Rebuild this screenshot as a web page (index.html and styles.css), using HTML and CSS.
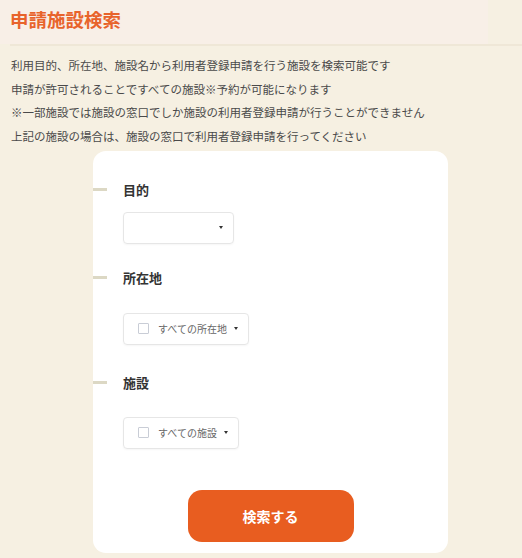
FILE: index.html
```html
<!DOCTYPE html>
<html lang="ja">
<head>
<meta charset="utf-8">
<title>申請施設検索</title>
<link rel="stylesheet" href="styles.css">
</head>
<body>
<div class="page-head">
  <h1 class="title">申請施設検索</h1>
</div>
<div class="rule"></div>
<div class="desc">
  <p>利用目的、所在地、施設名から利用者登録申請を行う施設を検索可能です</p>
  <p>申請が許可されることですべての施設※予約が可能になります</p>
  <p>※一部施設では施設の窓口でしか施設の利用者登録申請が行うことができません</p>
  <p>上記の施設の場合は、施設の窓口で利用者登録申請を行ってください</p>
</div>
<div class="card">
  <div class="field field-1">
    <div class="field-label"><span class="dash"></span><span>目的</span></div>
    <div class="select select-empty"><span class="caret"></span></div>
  </div>
  <div class="field field-2">
    <div class="field-label"><span class="dash"></span><span>所在地</span></div>
    <div class="select"><span class="check"></span><span class="opt">すべての所在地</span><span class="caret"></span></div>
  </div>
  <div class="field field-3">
    <div class="field-label"><span class="dash"></span><span>施設</span></div>
    <div class="select"><span class="check"></span><span class="opt">すべての施設</span><span class="caret"></span></div>
  </div>
  <div class="actions">
    <button class="search-btn" type="button">検索する</button>
  </div>
</div>
</body>
</html>
```
FILE: styles.css
```css
* { box-sizing: border-box; }
html, body { margin: 0; padding: 0; }
body {
  background: #f6f0e2;
  font-family: "Noto Sans CJK JP", "Noto Sans", sans-serif;
  color: #333;
  width: 522px;
  height: 558px;
  overflow: hidden;
}
.page-head {
  width: 488px;
  height: 44px;
  background: #f8efe7;
  padding-left: 10px;
  display: flex;
  align-items: center;
}
.title {
  margin: 0;
  font-size: 18.5px;
  font-weight: 700;
  color: #e8632b;
  line-height: 24px;
  padding-bottom: 6px;
}
.rule {
  margin-left: 10px;
  border-top: 2px solid #efe7d7;
}
.desc {
  margin-top: 8px;
  padding-left: 11px;
  font-size: 11.5px;
  line-height: 23.7px;
  color: #4a4a4a;
}
.desc p { margin: 0; white-space: nowrap; }
.card {
  margin: 2px 0 0 93px;
  width: 355px;
  height: 402px;
  background: #fff;
  border-radius: 13px;
  padding: 29px 0 12px 0;
}
.field-label {
  display: flex;
  align-items: center;
  gap: 16px;
  height: 20px;
  font-size: 13px;
  font-weight: 700;
  color: #333;
}
.dash {
  width: 14px;
  height: 3px;
  background: #dcd8c4;
}
.select {
  margin-left: 30px;
  height: 32px;
  display: inline-flex;
  align-items: center;
  border: 1px solid #e6e6e6;
  border-radius: 4px;
  padding: 0 10px 0 14px;
  box-shadow: 0 1px 2px rgba(0,0,0,0.04);
}
.select-empty {
  width: 111px;
  justify-content: flex-end;
}
.field-1 .select { margin-top: 12px; }
.field-2 { margin-top: 24px; }
.field-2 .select { margin-top: 25px; }
.field-3 { margin-top: 28px; }
.field-3 .select { margin-top: 24px; }
.check {
  width: 11px;
  height: 11px;
  border: 1px solid #c9cdd6;
  border-radius: 1px;
  margin-right: 9px;
}
.opt {
  font-size: 10px;
  color: #666;
  line-height: 14px;
}
.caret {
  width: 0;
  height: 0;
  border-left: 2.5px solid transparent;
  border-right: 2.5px solid transparent;
  border-top: 3px solid #333;
  margin-left: 7px;
}
.actions {
  margin-top: 41px;
  display: flex;
  justify-content: center;
}
.search-btn {
  width: 166px;
  height: 52px;
  border: none;
  border-radius: 14px;
  background: #e85d20;
  color: #fff;
  font-family: "Noto Sans CJK JP", "Noto Sans", sans-serif;
  font-size: 14px;
  font-weight: 700;
  cursor: pointer;
}
```
